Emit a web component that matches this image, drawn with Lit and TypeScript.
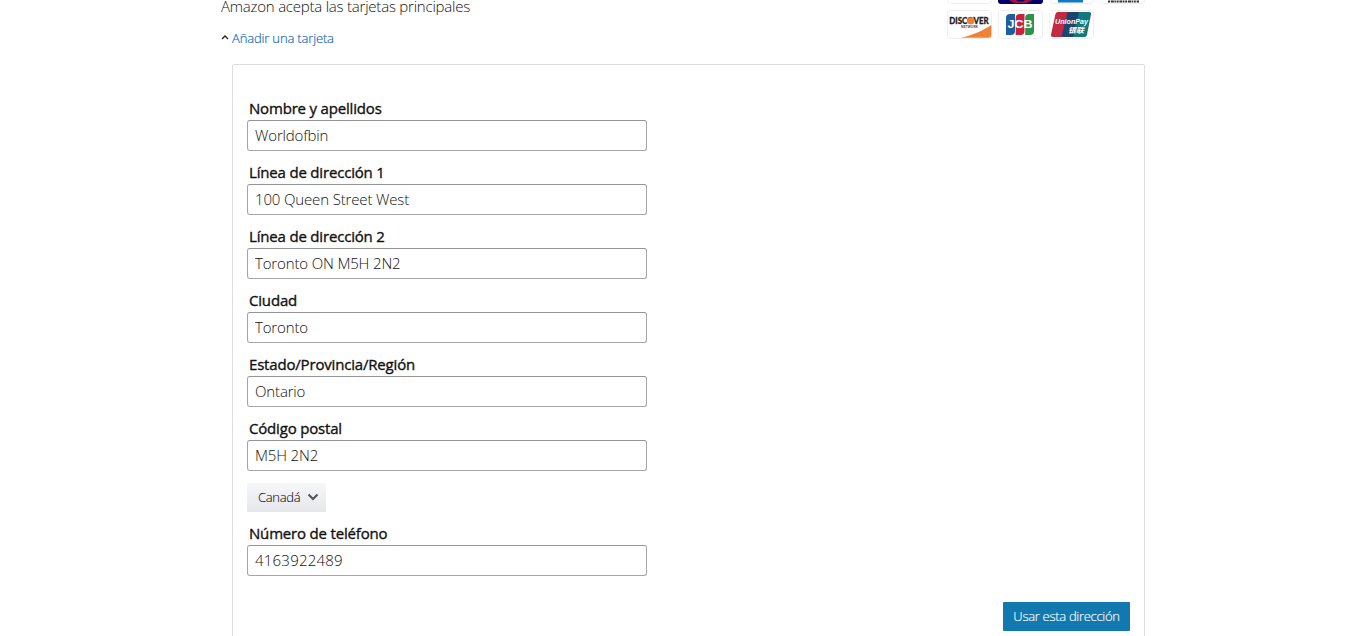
import { LitElement, html, css, svg } from 'lit';
import { customElement, property } from 'lit/decorators.js';

interface Field {
    label: string;
    value: string;
}

@customElement('card-logo')
export class CardLogo extends LitElement {
    @property() brand = '';

    static styles = css`
:host {
    display: block;
    width: 45px;
    height: 29px;
}

svg {
    display: block;
}

.discover {
    font: 900 10px Lato, sans-serif;
    stroke: #222;
    stroke-width: 0.3px;
}

.network {
    font: 700 3px "Liberation Sans", sans-serif;
}

.jcb {
    font: 700 10px "Liberation Sans", sans-serif;
}

.union {
    font: italic 700 8px/1 "Liberation Sans", sans-serif;
}

.yinlian {
    font: italic 700 7.5px/1 "Noto Sans CJK SC", sans-serif;
}
`;

    private art() {
        switch (this.brand) {
            case 'visa':
                return svg``;
            case 'maestro':
                return svg`<rect width="45" height="29" rx="3" fill="#02006b"/>
<path d="M11 25h7l2 1.500h5l2-1.500h7l-5 3H16z" fill="#a5113c"/>`;
            case 'amex':
                return svg`<rect x="9" y="3" width="25" height="24.500" fill="#1479be"/>`;
            case 'diners':
                return svg`<path d="M8 26.500h31" stroke="#333" stroke-width="2.200" stroke-dasharray="2 .8 3 .6 1.500 .7"/>`;
            case 'discover':
                return svg`<path d="M14 27.800C25 25.500 37 20 44.300 15V25.500q0 2.300-2.500 2.300z" fill="#f08235"/>
<text class="discover" x="2.200" y="14" textLength="39.500" lengthAdjust="spacingAndGlyphs" fill="#222">DISCOVER</text>
<circle cx="24" cy="10.700" r="3.500" fill="#f08235"/>
<text class="network" x="14" y="18" textLength="17" fill="#333">NETWORK</text>`;
            case 'jcb':
                return svg`<path d="M8 8q0-4 4-4h5v17q0 4-4 4H8z" fill="#1c5f9c"/>
<path d="M17.700 8q0-4 4-4h4.800v17q0 4-4 4h-4.800z" fill="#c9213f"/>
<path d="M27.200 8q0-4 4-4H36v17q0 4-4 4h-4.800z" fill="#2b9448"/>
<text class="jcb" x="9.500" y="18" textLength="25" lengthAdjust="spacingAndGlyphs" fill="#fff">JCB</text>`;
            default:
                return svg`<path d="M9 2H20l-6 25H4q-2.500 0-2-2.500L6.500 4q.5-2 2.500-2z" fill="#c02a42"/>
<path d="M18.500 2H31l-6 25H12.500z" fill="#1b4470"/>
<path d="M30 2h10q2.500 0 2 2.500L38 24.500q-.5 2.500-2.500 2.500H24z" fill="#14777b"/>
<text class="union" x="6" y="14" textLength="33" lengthAdjust="spacingAndGlyphs" fill="#fff">UnionPay</text>
<text class="yinlian" x="19" y="22.500" textLength="16" lengthAdjust="spacingAndGlyphs" fill="#fff">银联</text>`;
        }
    }

    render() {
        return html`
<svg width="45" height="29" viewBox="0 0 45 29">
    <rect x=".5" y=".5" width="44" height="28" rx="3" fill="#fff" stroke="#eee"/>
    ${this.art()}
</svg>
`;
    }
}

@customElement('app-root')
export class AppRoot extends LitElement {
    private brands = ['visa', 'maestro', 'amex', 'diners', 'discover', 'jcb', 'unionpay'];

    private address: Field[] = [
        { label: 'Nombre y apellidos', value: 'Worldofbin' },
        { label: 'Línea de dirección 1', value: '100 Queen Street West' },
        { label: 'Línea de dirección 2', value: 'Toronto ON M5H 2N2' },
        { label: 'Ciudad', value: 'Toronto' },
        { label: 'Estado/Provincia/Región', value: 'Ontario' },
        { label: 'Código postal', value: 'M5H 2N2' },
    ];

    private phone: Field = { label: 'Número de teléfono', value: '4163922489' };

    static styles = css`
:host {
    display: block;
    height: 636px;
    overflow: hidden;
    background: #fff;
    color: #111;
    font: 300 15px/20px "Open Sans", "Noto Sans", sans-serif;
}

.page {
    width: 924px;
    margin-left: 221px;
}

.head {
    display: flex;
    justify-content: space-between;
    height: 64px;
}

.accepts {
    margin: -4px 0 12px;
    letter-spacing: -0.22px;
}

.add {
    display: flex;
    align-items: center;
    gap: 3px;
    color: #0066c0;
    font-size: 13px;
    letter-spacing: -0.16px;
    text-decoration: none;
    -webkit-text-stroke: 0.15px;
}

.cards {
    display: grid;
    grid-template-columns: repeat(4, 45px);
    grid-auto-rows: 29px;
    gap: 6px;
    margin-top: -25px;
}

.panel {
    box-sizing: border-box;
    height: 600px;
    margin-left: 11px;
    padding: 33px 14px 0;
    border: 1px solid #ddd;
    border-radius: 2px;
}

.field {
    display: block;
    width: 400px;
    margin-bottom: 11px;
}

.label {
    display: block;
    height: 22px;
    padding-left: 2px;
    font-weight: 400;
    letter-spacing: -0.18px;
    white-space: nowrap;
    -webkit-text-stroke: 0.35px;
}

input {
    display: block;
    box-sizing: border-box;
    width: 400px;
    height: 31px;
    margin: 0;
    padding: 0 7px 2px;
    border: 1px solid #a6a6a6;
    border-top-color: #949494;
    border-radius: 3px;
    outline: none;
    background: #fff;
    color: #111;
    font: inherit;
    letter-spacing: -0.15px;
}

input[inputmode="tel"] {
    letter-spacing: 0.22px;
}

button {
    display: flex;
    align-items: center;
    border: 0;
    height: 29px;
    font: inherit;
    font-size: 13px;
    white-space: nowrap;
}

.country {
    justify-content: space-between;
    width: 79px;
    margin: 12px 0 11px;
    padding: 0 7px 1px 11px;
    border-radius: 1px;
    background: linear-gradient(#f6f7f9, #e6e7eb);
    color: #111;
    letter-spacing: -0.3px;
    -webkit-text-stroke: 0.1px;
}

.actions {
    display: flex;
    justify-content: flex-end;
    margin-top: 26px;
}

.submit {
    justify-content: center;
    width: 127px;
    padding: 0 0 1px;
    border-radius: 1px;
    background: #1179b0;
    color: #fff;
    letter-spacing: -0.3px;
    -webkit-text-stroke: 0.15px;
}
`;

    private renderField(field: Field, mode = 'text') {
        return html`
<label class="field">
    <span class="label">${field.label}</span>
    <input type="text" inputmode=${mode} .value=${field.value}>
</label>
`;
    }

    render() {
        return html`
<div class="page">
    <div class="head">
        <div>
            <p class="accepts">Amazon acepta las tarjetas principales</p>
            <a class="add" href="#">
                <svg width="8" height="8" viewBox="0 0 8 8"><path d="M1 5l3-3 3 3" fill="none" stroke="#222" stroke-width="1.300"/></svg>
                <span>Añadir una tarjeta</span>
            </a>
        </div>
        <div class="cards">${this.brands.map(b => html`<card-logo .brand=${b}></card-logo>`)}</div>
    </div>
    <div class="panel">
        ${this.address.map(f => this.renderField(f))}
        <button class="country">
            <span>Canadá</span>
            <svg width="12" height="12" viewBox="0 0 12 12"><path d="M1.500 3.500L6 8l4.500-4.500" fill="none" stroke="#555" stroke-width="2"/></svg>
        </button>
        ${this.renderField(this.phone, 'tel')}
        <div class="actions"><button class="submit">Usar esta dirección</button></div>
    </div>
</div>
`;
    }
}
